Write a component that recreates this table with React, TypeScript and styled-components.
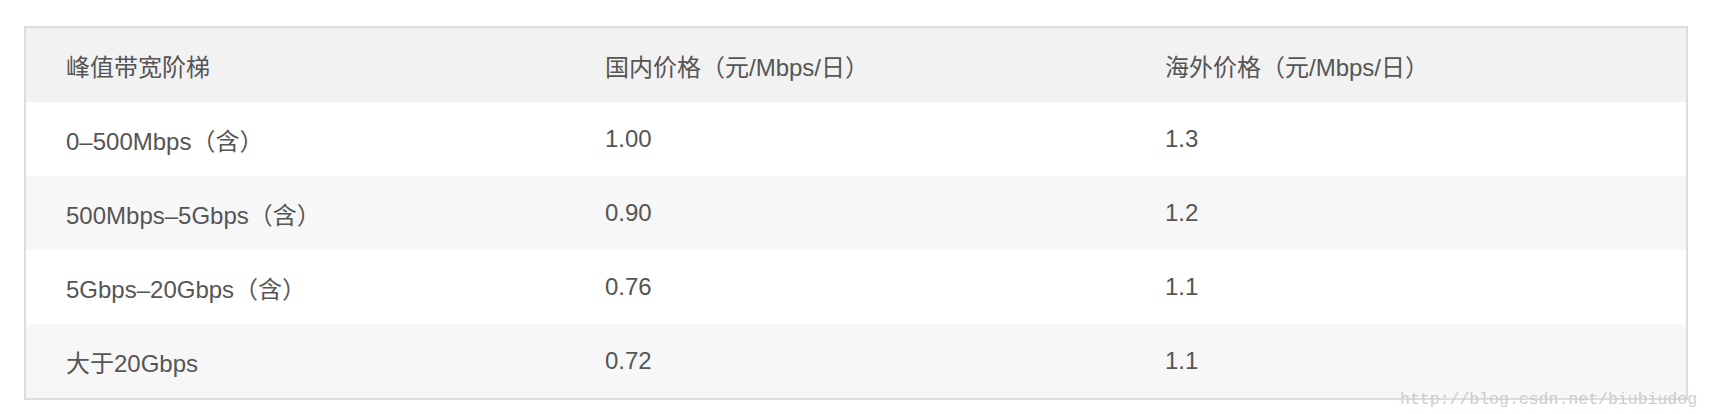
import React from "react";
import styled, { createGlobalStyle } from "styled-components";

const GlobalStyle = createGlobalStyle`
  body {
    margin: 0;
    background: #ffffff;
  }
`;

const Page = styled.div`
  position: relative;
  width: 1712px;
  height: 414px;
  padding: 26px 0 0 24px;
  box-sizing: border-box;
`;

const Table = styled.div`
  width: 1664px;
  border: 2px solid #dddddd;
  box-sizing: border-box;
  font-family: "Liberation Sans", "Noto Sans CJK SC", sans-serif;
  font-size: 24px;
  color: #555555;
`;

const Row = styled.div<{ $bg: string }>`
  display: grid;
  grid-template-columns: 539px 560px 1fr;
  height: 74px;
  align-items: center;
  background: ${(p) => p.$bg};
`;

const Cell = styled.div`
  padding-left: 40px;
  white-space: nowrap;
`;

const Watermark = styled.div`
  position: absolute;
  left: 1400px;
  top: 390px;
  font-family: "Liberation Mono", monospace;
  font-size: 16.5px;
  color: #cccccc;
  white-space: nowrap;
`;

const header = ["峰值带宽阶梯", "国内价格（元/Mbps/日）", "海外价格（元/Mbps/日）"];

const rows = [
  ["0–500Mbps（含）", "1.00", "1.3"],
  ["500Mbps–5Gbps（含）", "0.90", "1.2"],
  ["5Gbps–20Gbps（含）", "0.76", "1.1"],
  ["大于20Gbps", "0.72", "1.1"],
];

export default function App() {
  return (
    <>
      <GlobalStyle />
      <Page>
        <Table>
          <Row $bg="#f2f2f2">
            {header.map((h) => (
              <Cell key={h}>{h}</Cell>
            ))}
          </Row>
          {rows.map((r, i) => (
            <Row key={i} $bg={i % 2 === 0 ? "#ffffff" : "#f7f7f7"}>
              {r.map((c, j) => (
                <Cell key={j}>{c}</Cell>
              ))}
            </Row>
          ))}
        </Table>
        <Watermark>http://blog.csdn.net/biubiudog</Watermark>
      </Page>
    </>
  );
}
